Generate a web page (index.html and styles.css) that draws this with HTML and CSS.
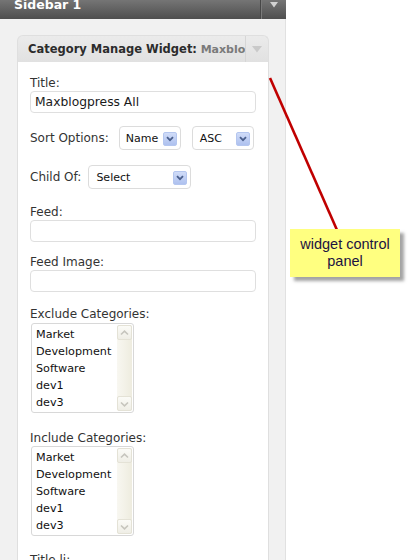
FILE: index.html
```html
<!DOCTYPE html>
<html>
<head>
<meta charset="utf-8">
<link rel="stylesheet" href="styles.css">
</head>
<body>
<div class="screen">
  <aside class="sidebar">
    <div class="sidebar-head">
      <span class="sidebar-title">Sidebar 1</span>
      <span class="head-toggle"><svg width="8" height="6" viewBox="0 0 8 6"><path d="M0 0H8L4 5.5Z" fill="#d2d2d2"/></svg></span>
    </div>
    <div class="sidebar-panel">
      <div class="widget">
        <div class="widget-head">
          <div class="widget-title"><b>Category Manage Widget:</b> <span class="instance">Maxblogpress All</span></div>
          <div class="widget-toggle"><svg width="10" height="7" viewBox="0 0 10 7"><path d="M0 0H10L5 6.5Z" fill="#c9c9c9"/></svg></div>
        </div>
        <div class="widget-body">
          <div class="field">
            <label class="lbl">Title:</label>
            <input class="text" type="text" value="Maxblogpress All">
          </div>
          <div class="row row-sort">
            <label class="lbl">Sort Options:</label>
            <div class="select sel-sort"><span>Name</span><span class="sel-btn"><svg width="8" height="6" viewBox="0 0 8 6"><path d="M1 1.2L4 4.2L7 1.2" fill="none" stroke="#4a5f8c" stroke-width="1.8"/></svg></span></div>
            <div class="select sel-sort sel-order"><span>ASC</span><span class="sel-btn"><svg width="8" height="6" viewBox="0 0 8 6"><path d="M1 1.2L4 4.2L7 1.2" fill="none" stroke="#4a5f8c" stroke-width="1.8"/></svg></span></div>
          </div>
          <div class="row row-child">
            <label class="lbl">Child Of:</label>
            <div class="select sel-child"><span>Select</span><span class="sel-btn"><svg width="8" height="6" viewBox="0 0 8 6"><path d="M1 1.2L4 4.2L7 1.2" fill="none" stroke="#4a5f8c" stroke-width="1.8"/></svg></span></div>
          </div>
          <div class="field field-feed">
            <label class="lbl">Feed:</label>
            <input class="text" type="text" value="">
          </div>
          <div class="field field-image">
            <label class="lbl">Feed Image:</label>
            <input class="text" type="text" value="">
          </div>
          <div class="field field-exclude">
            <label class="lbl">Exclude Categories:</label>
            <div class="listbox">
              <ul class="items">
                <li>Market</li><li>Development</li><li>Software</li><li>dev1</li><li>dev3</li>
              </ul>
              <div class="scroll">
                <span class="sbtn"><svg width="9" height="6" viewBox="0 0 9 6"><path d="M1 4.5L4.5 1.2L8 4.5" fill="none" stroke="#c6c5bd" stroke-width="1.6"/></svg></span>
                <span class="sbtn"><svg width="9" height="6" viewBox="0 0 9 6"><path d="M1 1.5L4.5 4.8L8 1.5" fill="none" stroke="#c6c5bd" stroke-width="1.6"/></svg></span>
              </div>
            </div>
          </div>
          <div class="field field-include">
            <label class="lbl">Include Categories:</label>
            <div class="listbox">
              <ul class="items">
                <li>Market</li><li>Development</li><li>Software</li><li>dev1</li><li>dev3</li>
              </ul>
              <div class="scroll">
                <span class="sbtn"><svg width="9" height="6" viewBox="0 0 9 6"><path d="M1 4.5L4.5 1.2L8 4.5" fill="none" stroke="#c6c5bd" stroke-width="1.6"/></svg></span>
                <span class="sbtn"><svg width="9" height="6" viewBox="0 0 9 6"><path d="M1 1.5L4.5 4.8L8 1.5" fill="none" stroke="#c6c5bd" stroke-width="1.6"/></svg></span>
              </div>
            </div>
          </div>
          <div class="field field-li">
            <label class="lbl">Title li:</label>
          </div>
        </div>
      </div>
    </div>
  </aside>
  <div class="main-area"></div>

  <svg class="pointer" width="408" height="560" viewBox="0 0 408 560">
    <line x1="270" y1="78" x2="337" y2="230" stroke="#c00000" stroke-width="2.6"/>
  </svg>
  <div class="note">widget control<br>panel</div>
</div>
</body>
</html>
```

FILE: styles.css
```css
html, body {
  margin: 0;
  padding: 0;
  background: #ffffff;
}

body {
  font-family: "DejaVu Sans", Verdana, sans-serif;
  color: #333333;
}

.screen {
  position: relative;
  width: 408px;
  height: 560px;
  overflow: hidden;
  display: flex;
}

.sidebar {
  width: 286px;
  flex: none;
  display: flex;
  flex-direction: column;
}

.sidebar-head {
  height: 19px;
  flex: none;
  display: flex;
  align-items: flex-start;
  background: linear-gradient(#757575, #4e4e4e);
}

.sidebar-title {
  margin-top: -1px;
  padding-left: 14px;
  font-size: 12.5px;
  font-weight: bold;
  line-height: 12px;
  color: #ffffff;
}

.head-toggle {
  margin-left: auto;
  width: 26px;
  height: 19px;
  border-left: 1px solid #474747;
  box-shadow: inset 1px 0 0 #7a7a7a;
  display: flex;
  justify-content: center;
  padding-top: 2px;
  box-sizing: border-box;
}

.sidebar-panel {
  flex: 1;
  background: #f1f1f1;
  border-right: 1px solid #e1e1e1;
  padding-top: 16px;
  padding-left: 17px;
}

.widget {
  width: 252px;
}

.widget-head {
  height: 27px;
  box-sizing: border-box;
  border: 1px solid #dfdfdf;
  border-bottom: none;
  border-radius: 6px 6px 0 0;
  background: linear-gradient(#ebebeb, #e1e1e1);
  display: flex;
  align-items: center;
}

.widget-title {
  flex: 1;
  min-width: 0;
  padding-left: 10px;
  white-space: nowrap;
  overflow: hidden;
  font-size: 11.5px;
  color: #2c2c2c;
}

.widget-title b {
  font-weight: bold;
}

.instance {
  font-size: 11px;
  font-weight: bold;
  color: #7a7a7a;
}

.widget-toggle {
  width: 22px;
  height: 26px;
  border-left: 1px solid #d6d6d6;
  display: flex;
  align-items: center;
  justify-content: center;
}

.widget-body {
  background: #ffffff;
  border: 1px solid #dfdfdf;
  border-top: none;
  padding: 14px 11px 40px 12px;
  height: 560px;
}

.lbl {
  display: block;
  font-size: 12px;
  line-height: 14px;
  color: #333333;
}

.text {
  display: block;
  box-sizing: border-box;
  width: 226px;
  height: 22px;
  margin: 1px 0 0 0;
  padding: 0 4px;
  border: 1px solid #dfdfdf;
  border-radius: 4px;
  background: #ffffff;
  font-family: "DejaVu Sans", Verdana, sans-serif;
  font-size: 12.3px;
  color: #1a1a1a;
  outline: none;
}

.row {
  display: flex;
  align-items: center;
}

.row .lbl {
  display: inline;
}

.row-sort {
  margin-top: 13px;
}

.row-sort .lbl {
  margin-right: 10px;
}

.row-child {
  margin-top: 15px;
}

.row-child .lbl {
  margin-right: 7px;
}

.select {
  box-sizing: border-box;
  height: 24px;
  border: 1px solid #dcdcdc;
  border-radius: 4px;
  background: #ffffff;
  display: flex;
  align-items: center;
  padding-left: 6px;
  padding-right: 3px;
  font-size: 11px;
  color: #111111;
}

.sel-sort {
  width: 62px;
}

.sel-order {
  margin-left: 11px;
  padding-left: 7px;
}

.sel-child {
  width: 103px;
  padding-left: 7px;
}

.sel-btn {
  margin-left: auto;
  margin-top: 2px;
  width: 14px;
  height: 14px;
  box-sizing: border-box;
  border: 1px solid #b4c6ef;
  border-radius: 2px;
  background: linear-gradient(#d0dcf8, #aec1ef);
  display: flex;
  align-items: center;
  justify-content: center;
}

.field-feed {
  margin-top: 16px;
}

.field-image {
  margin-top: 13px;
}

.field-exclude {
  margin-top: 15px;
}

.field-exclude .listbox {
  margin-top: 2px;
}

.field-include {
  margin-top: 18px;
}

.field-include .listbox {
  margin-top: 1px;
}

.field-li {
  margin-top: 17px;
}

.listbox {
  box-sizing: border-box;
  width: 103px;
  height: 90px;
  margin-left: 1px;
  border: 1px solid #d8d8d8;
  border-radius: 3px;
  background: #ffffff;
  display: flex;
}

.items {
  flex: 1;
  list-style: none;
  margin: 0;
  padding: 2px 0 0 4px;
  font-size: 11.2px;
  line-height: 17px;
  color: #111111;
  white-space: nowrap;
  overflow: hidden;
}

.scroll {
  width: 15px;
  margin: 1px 1px 1px 0;
  background: linear-gradient(90deg, #f8f7f1, #eeecdf);
  display: flex;
  flex-direction: column;
  justify-content: space-between;
  border-radius: 2px;
}

.sbtn {
  height: 15px;
  box-sizing: border-box;
  border: 1px solid #e4e2d6;
  border-radius: 2px;
  background: linear-gradient(#fbfbf7, #efeee6);
  display: flex;
  align-items: center;
  justify-content: center;
}

.main-area {
  flex: 1;
  background: #ffffff;
}

.pointer {
  position: absolute;
  left: 0;
  top: 0;
  pointer-events: none;
}

.note {
  position: absolute;
  left: 290px;
  top: 229px;
  width: 110px;
  height: 48px;
  box-sizing: border-box;
  background: #ffff80;
  box-shadow: 4px 4px 3px rgba(90, 90, 90, 0.55);
  display: flex;
  align-items: center;
  justify-content: center;
  text-align: center;
  font-family: "Liberation Sans", Arial, sans-serif;
  font-size: 14.5px;
  line-height: 17px;
  color: #1c1240;
}
```
